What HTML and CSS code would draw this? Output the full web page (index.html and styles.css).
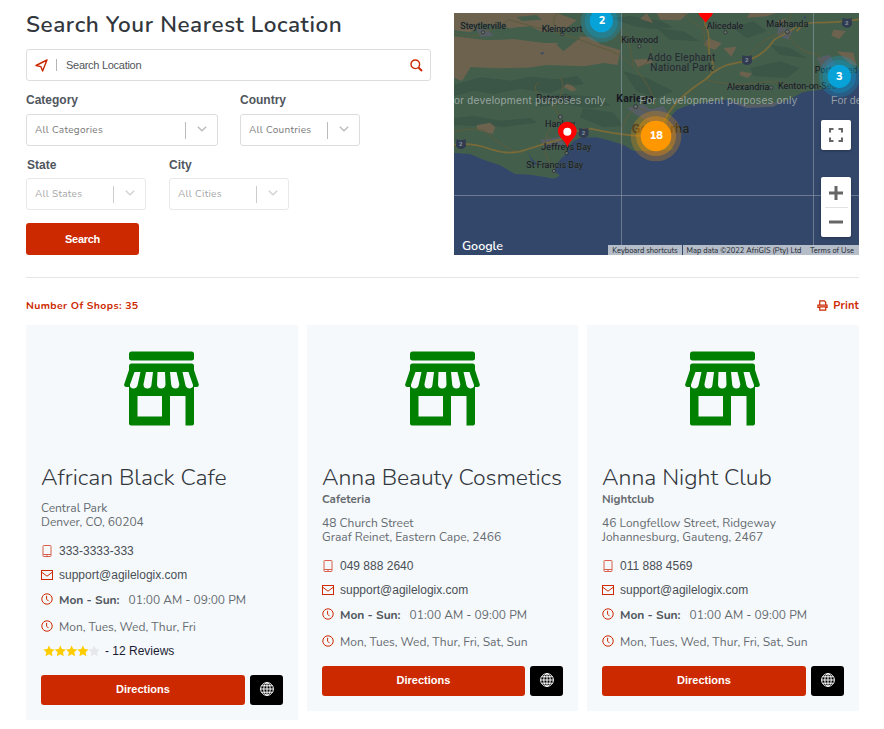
FILE: index.html
```html
<!DOCTYPE html>
<html lang="en">
<head>
<meta charset="utf-8">
<title>Store Locator</title>
<link rel="stylesheet" href="styles.css">
</head>
<body>
<svg width="0" height="0" class="sprite" aria-hidden="true">
  <symbol id="shop" viewBox="0 0 75 75">
    <rect x="5" y="0.5" width="65" height="9" rx="2.5"/>
    <path fill-rule="evenodd" d="M7.500 12.500h60q2.500 0 2.500 2.500v4l4.700 14q.7 2.500-1.700 3h-3v36.500q0 2-2 2H61.500V45H46v29.500H7q-2 0-2-2V36H2q-2.500-.5-1.700-3L5 19v-4q0-2.500 2.500-2.500zM10.500 21L6 33.500q-.5 4 3.500 4 3 0 4-3L16.500 21zM22 21l-2.500 12q-.3 4.500 4 4.500 3.800 0 4-4L29 21zM33.500 21L33 33.500q.3 4 4.200 4 4 0 4.300-4L41 21zM46 21l1.200 12.500q.5 4 4.200 4 4 0 3.900-4.500L52.500 21zM58.500 21l3 13.500q1.200 3 4.300 3 3.600-.3 3.200-3.500L64.500 21zM13.500 45v20.500H38V45z"/>
  </symbol>
  <symbol id="phone" viewBox="0 0 12 12"><rect x="2" y=".5" width="8" height="11" rx=".8"/><path d="M2 9.500h8M5.500 10.600h1"/></symbol>
  <symbol id="mail" viewBox="0 0 12 12"><rect x=".5" y="1.500" width="11" height="9"/><path d="M.5 3L6 7.200 11.500 3"/></symbol>
  <symbol id="clock" viewBox="0 0 12 12"><circle cx="6" cy="6" r="5.200"/><path d="M5.600 2.800v3.400l2 2"/></symbol>
  <symbol id="globe" viewBox="0 0 14 14"><circle cx="7" cy="7" r="6.400"/><ellipse cx="7" cy="7" rx="3.200" ry="6.400"/><path d="M7 .6v12.800M.6 7h12.800M1.600 3.800h10.800M1.600 10.200h10.800"/></symbol>
  <symbol id="chevron" viewBox="0 0 10 6"><path d="M.8.8L5 4.800 9.200.8"/></symbol>
</svg>
<main class="page">
  <section class="top">
    <form class="search">
      <h1>Search Your Nearest Location</h1>
      <div class="search-box">
        <svg class="nav-icon" viewBox="0 0 13 13"><path d="M12 1L1 6.500 5.800 7.600 7.600 12z"/></svg>
        <span class="bar"></span>
        <span class="placeholder">Search Location</span>
        <svg class="find-icon" viewBox="0 0 13 13"><circle cx="5.300" cy="5.300" r="4.300"/><path d="M8.500 8.500l3.500 3.500" stroke-width="2"/></svg>
      </div>
      <div class="fields">
        <label class="field wide"><b>Category</b><span class="select"><span class="value cat">All Categories</span><i></i><svg><use href="#chevron"/></svg></span></label>
        <label class="field"><b>Country</b><span class="select"><span class="value">All Countries</span><i></i><svg><use href="#chevron"/></svg></span></label>
      </div>
      <div class="fields second">
        <label class="field off"><b class="inset">State</b><span class="select"><span class="value">All States</span><i></i><svg><use href="#chevron"/></svg></span></label>
        <label class="field off"><b>City</b><span class="select"><span class="value">All Cities</span><i></i><svg><use href="#chevron"/></svg></span></label>
      </div>
      <button class="btn submit" type="button">Search</button>
    </form>

    <div class="map">
      <svg class="map-art" viewBox="12 15 1215 726">
        <rect x="12" y="15" width="1215" height="726" fill="#33476b"/>
        <path fill="#435f4c" d="M12 15H1227V185L1160 225 1110 245 1060 252 1010 278 970 293 900 293 830 275 770 283 720 290 680 305 655 335 643 365 655 400 670 425 600 430 550 428 520 410 480 398 440 388 395 388 370 400 357 415 352 435 330 455 312 488 330 503 312 512 270 505 240 500 195 498 150 472 100 455 60 438 12 435z"/>
        <g fill="#3b5546">
          <path d="M12 230l80-22 90 10 60-12 80 8 60-10 20 24-60 10-40 18-90-14-80 16-60-10-60 16zM250 275l80-18 110 10 40 24-60 10-80-12-70 8zM12 330l60-6 80 14 90-8 20 14-100 12-150-4zM400 300l90 14 30 40-60 4-70-30zM520 190l70 20 80 40-50 20-60-20zM620 60l80 10 50 30-90-5zM850 60l60-20 40 30-60 20zM900 180l90-20 60 20-40 30-100-6zM960 110l60 10 50 30-80-10zM480 30l60-6 90 14 40 20-60 6-60-10z"/>
        </g>
        <g fill="#6c624e">
          <path d="M12 15H320l60 22-40 30-60 6-40-18-60 6-80-14-40 26-60-8zM12 85l100 12 80-4 90 12 60 0 20-22 60 4 30 22 60 18-10 44-40-6-60 10-110-4-60 8-100 2-70-4-26 42-24-10zM620 15h95l-24 22-60-2zM900 15h80l-30 10-60 4zM775 90l40 16-20 20-34-14zM550 155l38-2 26 8-50 16zM350 228l16 4 14 14-16 4-24-14zM80 352l40-8 16 14-8 20-46-12zM820 120l40-4-16 30zM870 190l36 6-12 14-24-8zM1150 65l38 4-20 24-24-10zM1160 130l50 4 10 40-20-6zM980 40l30-10-16 30zM590 15l20 30-40-12z"/>
        </g>
        <g fill="#435f4c"><path d="M150 70l60-14 36 16-70 8zM320 110l24-30 36-10 10 20-50 40zM200 27l60-6 16 14-60 4z"/></g>
        <g fill="#565d65"><path d="M530 300l50-12 20 16 40-10 14 20-20 40-40-14-36-20zM80 62l36 4 14 18-40 2zM985 55l44 10-14 30-34-14zM1100 150l40-10 16 30-34 16zM270 395l60-8 14 24-60 6zM830 280l60 10 60-2 60-14-40 22-80 4z"/></g>
        <g fill="#33476b"><path d="M234 430l10 20 20 20-16 0zM1060 30l6-8 2 10zM270 135l12-3-4 8zM42 82l6-2-2 8z"/></g>
        <g class="roads minor">
          <path d="M12 75q60 20 88-2 50-14 76-38 70 20 150 40 60 16 120 42 60 12 110 64 50 60 60 112M328 75q-30-30-8-60M328 325q-20-40-50-56-40-30-10-48M312 300q40-60 20-90M560 295q-60 50-44 120M560 295l80 44M560 180q60-20 40-70M1011 70q20 60 90 70 40 40 50 90M1011 70q-80 20-110 70M990 80q40-60 30-65M765 215q80 20 140 12 90-20 160 24M700 15q40 40 64 50M330 325q-40 40-46 80-6 30 30 85M350 435q-30-30-60-50M12 370q60-10 90-4 60 60 116 70M530 75q10 40 20 100M800 180q-50-80-35-140"/>
        </g>
        <g class="roads">
          <path d="M12 410q60-6 110 14 60 20 110 0 60-20 100-30 40-30 90-32 60 14 140 22 60-6 84-52 30-60 118-116 40-44 100-52 70-10 110-70 40-20 66-38M765 215q40-20 12-80 4-60-14-95"/>
          <path d="M1040 70q20-30 70-26 50 0 117-10" />
        </g>
        <path d="M514.500 15V741M1090.500 15V741M12 562.500H1227" stroke="#8a96a4" stroke-opacity=".65" stroke-width="3"/>
        <g fill="#303b50"><path id="sh" d="M19 394q14 5 28 0l1 20q-5 9-15 9t-15-9z"/><use href="#sh" x="368" y="-34"/><use href="#sh" x="858" y="-252"/><use href="#sh" x="1158" y="-364"/></g>
        <g class="shield"><text x="27" y="415">2</text><text x="395" y="381">2</text><text x="885" y="163">2</text><text x="1185" y="51">2</text></g>
        <g class="dots"><circle cx="99" cy="73" r="5"/><circle cx="337" cy="78" r="5"/><circle cx="568" cy="115" r="5"/><circle cx="826" cy="73" r="5"/><circle cx="1012" cy="71" r="6"/><circle cx="964" cy="239" r="5"/><circle cx="557" cy="296" r="6"/><circle cx="331" cy="327" r="6"/><circle cx="350" cy="435" r="5"/><circle cx="312" cy="489" r="5"/></g>
        <g class="places">
          <text x="31" y="63" textLength="137">Steytlerville</text>
          <text x="275" y="71" textLength="122">Kleinpoort</text>
          <text x="514" y="104" textLength="110">Kirkwood</text>
          <text x="770" y="63" textLength="110">Alicedale</text>
          <text x="949" y="57" textLength="126">Makhanda</text>
          <text x="831" y="247" textLength="127">Alexandria</text>
          <text x="984" y="242" textLength="175">Kenton-on-Sea</text>
          <text x="1094" y="196" textLength="129">Port Alfred</text>
          <text x="259" y="278" textLength="105">Patensie</text>
          <text x="285" y="357" textLength="90">Hankey</text>
          <text x="274" y="425" textLength="150">Jeffreys Bay</text>
          <text x="229" y="479" textLength="170">St Francis Bay</text>
          <text class="park" x="592" y="159" textLength="204">Addo Elephant</text>
          <text class="park" x="601" y="190" textLength="188">National Park</text>
          <text class="town" x="499" y="281" textLength="112">Kariega</text>
          <text class="city" x="545" y="374" textLength="173">Gqeberha</text>
        </g>
        <g class="watermark">
          <text x="12" y="287" textLength="453">or development purposes only</text>
          <text x="568" y="287" textLength="473">For development purposes only</text>
          <text x="1143" y="287" textLength="92">For de</text>
        </g>
        <g fill="#06a2d8">
          <circle cx="454" cy="41" r="62" opacity=".25"/><circle cx="454" cy="41" r="50" opacity=".3"/><circle cx="454" cy="38" r="35"/>
          <circle cx="1168" cy="205" r="62" opacity=".25"/><circle cx="1168" cy="205" r="50" opacity=".3"/><circle cx="1168" cy="205" r="35"/>
        </g>
        <g fill="#ff9800"><circle cx="618" cy="384" r="76" opacity=".25"/><circle cx="618" cy="384" r="60" opacity=".35"/><circle cx="618" cy="384" r="46"/></g>
        <g class="count"><text x="456" y="48">2</text><text x="1168" y="216">3</text><text x="619" y="394">18</text></g>
        <path fill="#f00" d="M352 418q-4-14-16-25-12-12-12-24a28 28 0 0 1 56 0q0 12-12 24-12 11-16 25zM745 15h44q-2 8-11 15l-11 14-11-14q-9-7-11-15z"/>
        <circle cx="352" cy="371" r="12" fill="#fff"/>
      </svg>
      <svg class="google" viewBox="0 0 44 16"><text x="0" y="12" textLength="41">Google</text></svg>
      <div class="controls">
        <span class="ctl"><svg viewBox="0 0 16 16"><path d="M2 5.500V2h3.500M10.500 2H14v3.500M2 10.500V14h3.500M10.500 14H14v-3.500"/></svg></span>
        <span class="ctl zoom"><svg viewBox="0 0 16 16"><path d="M8 1v14M1 8h14"/></svg><i></i><svg viewBox="0 0 16 16"><path d="M1 8h14"/></svg></span>
      </div>
      <div class="legal"><span class="keys">Keyboard shortcuts</span><span class="data">Map data ©2022 AfriGIS (Pty) Ltd</span><span class="terms">Terms of Use</span></div>
    </div>
  </section>

  <div class="summary">
    <span class="number">Number Of Shops: 35</span>
    <a class="print"><svg viewBox="0 0 12 12"><path d="M3 5V1h5l1.500 1.500V5M3 8H1V5.500h10V8H9.500M3 7.500h6.500v3.500H3z"/></svg>Print</a>
  </div>

  <section class="cards">
    <article class="card">
      <svg class="shop"><use href="#shop"/></svg>
      <h2>African Black Cafe</h2>
      <p class="address"><span>Central Park</span><br><span>Denver, CO, 60204</span></p>
      <div class="row"><svg class="pale"><use href="#phone"/></svg><span>333-3333-333</span></div>
      <div class="row"><svg><use href="#mail"/></svg><span>support@agilelogix.com</span></div>
      <div class="row hours"><svg><use href="#clock"/></svg><b>Mon - Sun:</b><span class="time">01:00 AM - 09:00 PM</span></div>
      <div class="row days"><svg><use href="#clock"/></svg><span>Mon, Tues, Wed, Thur, Fri</span></div>
      <div class="reviews">
        <svg viewBox="0 0 57 12"><path id="star" fill="#fc0" d="M6 .5l1.700 3.600 3.900.5-2.900 2.700.8 3.900L6 9.300l-3.500 1.900.8-3.900L.4 4.600l3.900-.5z"/><use href="#star" x="11.300"/><use href="#star" x="22.600"/><path fill="#e5e7ea" d="M51.200.5l1.700 3.600 3.900.5-2.900 2.700.8 3.900-3.500-1.900-3.500 1.900.8-3.900-2.900-2.700 3.900-.5z"/><use href="#star" x="33.900"/></svg>
        <span>- 12 Reviews</span>
      </div>
      <div class="actions"><a class="btn">Directions</a><a class="web"><svg><use href="#globe"/></svg></a></div>
    </article>
    <article class="card">
      <svg class="shop"><use href="#shop"/></svg>
      <h2 class="long">Anna Beauty Cosmetics</h2>
      <div class="category">Cafeteria</div>
      <p class="address"><span>48 Church Street</span><br><span>Graaf Reinet, Eastern Cape, 2466</span></p>
      <div class="row"><svg class="pale"><use href="#phone"/></svg><span>049 888 2640</span></div>
      <div class="row"><svg><use href="#mail"/></svg><span>support@agilelogix.com</span></div>
      <div class="row hours"><svg><use href="#clock"/></svg><b>Mon - Sun:</b><span class="time">01:00 AM - 09:00 PM</span></div>
      <div class="row days"><svg><use href="#clock"/></svg><span>Mon, Tues, Wed, Thur, Fri, Sat, Sun</span></div>
      <div class="actions"><a class="btn">Directions</a><a class="web"><svg><use href="#globe"/></svg></a></div>
    </article>
    <article class="card">
      <svg class="shop"><use href="#shop"/></svg>
      <h2>Anna Night Club</h2>
      <div class="category">Nightclub</div>
      <p class="address"><span>46 Longfellow Street, Ridgeway</span><br><span>Johannesburg, Gauteng, 2467</span></p>
      <div class="row"><svg class="pale"><use href="#phone"/></svg><span>011 888 4569</span></div>
      <div class="row"><svg><use href="#mail"/></svg><span>support@agilelogix.com</span></div>
      <div class="row hours"><svg><use href="#clock"/></svg><b>Mon - Sun:</b><span class="time">01:00 AM - 09:00 PM</span></div>
      <div class="row days"><svg><use href="#clock"/></svg><span>Mon, Tues, Wed, Thur, Fri, Sat, Sun</span></div>
      <div class="actions"><a class="btn">Directions</a><a class="web"><svg><use href="#globe"/></svg></a></div>
    </article>
  </section>
</main>
</body>
</html>
```
FILE: styles.css
```css
* { box-sizing: border-box; }
body { margin: 0; background: #fff; font-family: "Liberation Sans", Arial, sans-serif; font-size: 12px; color: #4a4f55; }
svg { display: block; flex: none; }
.sprite { position: absolute; }
.page { width: 833px; margin-left: 26px; padding-top: 13px; }

.top { display: flex; justify-content: space-between; height: 265px; border-bottom: 1px solid #e6e6e6; }
.search { width: 405px; }
h1 { margin: 0; height: 36px; line-height: 24px; font-family: Nunito, Lato, sans-serif; font-size: 22.5px; font-weight: 600; letter-spacing: .56px; color: #32373d; white-space: nowrap; }
.search-box { display: flex; align-items: center; height: 32px; border: 1px solid #ddd; border-radius: 3px; padding: 0 8px; }
.nav-icon, .find-icon { width: 13px; height: 13px; fill: none; stroke: #cc2900; stroke-width: 1.4; stroke-linejoin: round; }
.find-icon { margin-right: -1px; }
.bar { width: 1px; height: 12px; margin: 0 9px 0 8px; background: #b5b5b5; }
.placeholder { flex: 1; font-size: 11px; letter-spacing: -.28px; color: #50545a; }
.fields { display: flex; gap: 22px; margin-top: 12px; }
.fields.second { gap: 23px; margin-top: 11px; }
.field { width: 120px; display: block; }
.field.wide { width: 192px; }
.field b { display: block; height: 21px; line-height: 15px; font-size: 12px; color: #50565d; }
.second .field b { line-height: 16px; }
.second .field .inset { padding-left: 1px; }
.select { display: flex; align-items: center; height: 32px; border: 1px solid #ddd; border-radius: 3px; padding: 0 10px 0 8px; }
.value { flex: 1; font-family: Nunito, Lato, sans-serif; font-size: 10px; letter-spacing: .3px; color: #777; white-space: nowrap; }
.select i { width: 1px; height: 17px; background: #bbb; margin-right: 11px; }
.select svg { width: 10px; height: 6px; margin-bottom: 3px; fill: none; stroke: #bbb; stroke-width: 1.4; }
.off .select { border-color: #e8e8e8; }
.off .value { color: #a5a5a5; }
.off i { background: #ccc; }
.off svg { stroke: #d2d2d2; }
.btn { display: flex; align-items: center; justify-content: center; background: #cc2900; border: 0; border-radius: 3px; color: #fff; font: bold 11px "Liberation Sans", Arial, sans-serif; }
.submit { width: 113px; height: 32px; margin-top: 13px; letter-spacing: -.3px; }

.map { position: relative; width: 405px; height: 242px; overflow: hidden; }
.map-art { width: 405px; height: 242px; }
.roads { fill: none; stroke: #7a6a38; stroke-width: 5; }
.roads.minor { stroke: #5d5c3d; stroke-width: 3; }
.shield { font: bold 18px Roboto, sans-serif; fill: #8995a5; }
.dots { fill: #68716f; stroke: #202627; stroke-width: 2; }
.places { font: 400 27px Roboto, sans-serif; fill: #14191c; stroke: #4c5955; stroke-width: 2; paint-order: stroke; }
.places .park { font-size: 30px; fill: #20292b; }
.places .town { font-size: 31px; font-weight: 700; }
.places .city { font-size: 38px; font-weight: 500; fill: #202325; }
.watermark { font: 32px "Liberation Sans", sans-serif; fill: #b5bdbd; fill-opacity: .75; }
.count { font: 800 33px Nunito, sans-serif; fill: #fff; text-anchor: middle; }
.google { position: absolute; left: 8px; bottom: 1px; width: 44px; height: 16px; font: 600 12.5px Nunito, Lato, sans-serif; fill: #fff; }
.controls { position: absolute; right: 8px; top: 107px; display: flex; flex-direction: column; gap: 27px; }
.ctl { width: 30px; height: 30px; background: #fff; border-radius: 2px; display: flex; flex-direction: column; align-items: center; justify-content: center; box-shadow: 0 1px 3px rgba(0,0,0,.3); }
.ctl svg { width: 16px; height: 16px; fill: none; stroke: #666; stroke-width: 2; }
.ctl.zoom { height: 60px; gap: 6px; }
.ctl.zoom svg { stroke-width: 3; }
.ctl i { width: 23px; height: 1px; background: #e2e2e2; }
.legal { position: absolute; right: 0; bottom: 0; display: flex; height: 10px; font: 7.5px/11px Nunito, Lato, sans-serif; color: #20242c; white-space: nowrap; }
.legal span { background: #b5bdc8; text-align: center; }
.legal .keys { width: 74px; margin-right: 1px; }
.legal .data { width: 122px; }
.legal .terms { width: 54px; }

.summary { display: flex; justify-content: space-between; align-items: center; height: 47px; padding-top: 8px; color: #cc2900; font-family: Nunito, Lato, sans-serif; font-weight: 700; }
.number { font-size: 10.5px; letter-spacing: .38px; }
.print { display: flex; align-items: center; gap: 5px; font-size: 11px; letter-spacing: .2px; }
.print svg { width: 11px; height: 11px; fill: none; stroke: #cc2900; stroke-width: 1.3; }

.cards { display: grid; grid-template-columns: 272px 271px 272px; gap: 9px; align-items: start; }
.card { background: #f5f9fc; padding: 26px 15px 15px; }
.shop { width: 75px; height: 75px; margin: 0 83px 38px; fill: #008000; }
.card h2 { margin: 0; height: 28px; line-height: 28px; font-family: Nunito, Lato, sans-serif; font-size: 23px; font-weight: 300; color: #32373d; white-space: nowrap; }
.card .long { letter-spacing: -.1px; }
.category { height: 15px; font: bold 11.5px/14px Nunito, Lato, sans-serif; color: #666a6e; }
.address { margin: 9px 0 10px; font: 12px/14px Nunito, Lato, sans-serif; color: #666b70; white-space: nowrap; }
.row { display: flex; align-items: center; height: 24px; white-space: nowrap; }
.row svg { width: 12px; height: 12px; margin-right: 6px; fill: none; stroke: #cc2900; stroke-width: 1; }
.row .pale { stroke: #d6604a; }
.hours, .days { font-family: Nunito, Lato, sans-serif; color: #666b70; }
.hours { height: 26px; }
.hours svg { margin-top: -3px; }
.hours b { color: #50565d; }
.hours .time { margin-left: 9px; }
.days { height: 27px; }
.days svg { margin-top: -1px; }
.reviews { display: flex; align-items: center; height: 24px; padding: 0 0 2px 2px; color: #1b1c33; }
.reviews svg { width: 57px; height: 12px; margin-right: 5px; }
.actions { display: flex; gap: 5px; margin-top: 11px; }
.actions .btn { flex: 1; height: 30px; padding-bottom: 2px; }
.web { width: 33px; height: 30px; background: #000; border-radius: 3px; display: flex; align-items: center; justify-content: center; padding-bottom: 2px; }
.web svg { width: 14px; height: 14px; fill: none; stroke: #fff; stroke-width: 1; }
```
